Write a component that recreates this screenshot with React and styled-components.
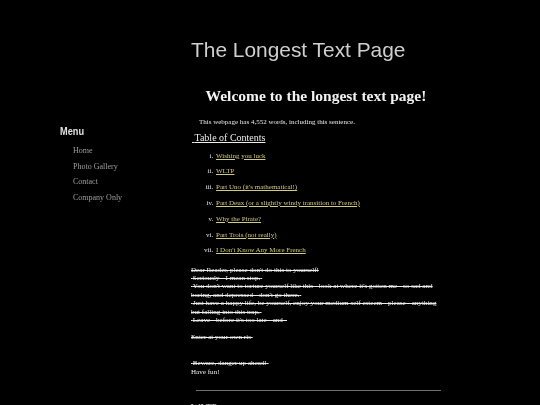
import React from "react";
import styled, { createGlobalStyle } from "styled-components";

const Global = createGlobalStyle`
  html, body { margin: 0; padding: 0; background: #000; }
  body {
    font-family: "Liberation Serif", "Times New Roman", serif;
    color: #e2e2e2;
    -webkit-font-smoothing: antialiased;
  }
`;

const Page = styled.div`
  width: 460px;
  margin: 0 auto;
  display: grid;
  grid-template-columns: 151px 250px;
  align-items: start;
  will-change: transform;
`;

const Sidebar = styled.nav`
  padding: 124.5px 0 0 20px;
`;

const MenuTitle = styled.div`
  display: block;
  font-family: "Liberation Sans", Arial, sans-serif;
  font-weight: bold;
  font-size: 11.5px;
  line-height: 13.5px;
  color: #e0e0e0;
  transform: scaleX(0.8);
  transform-origin: left center;
`;

const MenuList = styled.ul`
  list-style: none;
  margin: 5px 0 0;
  padding: 0 0 0 13px;
`;

const MenuItem = styled.li`
  font-size: 8px;
  line-height: 15.7px;
  color: #9e9e9e;
`;

const Main = styled.main`
  display: flex;
  flex-direction: column;
`;

const SiteTitle = styled.h1`
  margin: 37.5px 0 0;
  font-family: "Liberation Sans", Arial, sans-serif;
  font-weight: normal;
  font-size: 20.9px;
  line-height: 24px;
  color: #cfcfcf;
  white-space: nowrap;
`;

const Welcome = styled.h2`
  margin: 25px 0 0;
  font-size: 15.5px;
  line-height: 18px;
  font-weight: bold;
  text-align: center;
  color: #f2f2f2;
  white-space: nowrap;
`;

const Intro = styled.p`
  margin: 13.1px 0 0;
  padding-left: 8px;
  font-size: 7px;
  line-height: 9px;
  color: #e8e8e8;
`;

const TocHeading = styled.div`
  margin-top: 5px;
  font-size: 10px;
  line-height: 12px;
  color: #ececec;
  text-decoration: underline;
  padding-left: 1px;
`;

const Toc = styled.ol`
  list-style: lower-roman;
  margin: 5px 0 0;
  padding: 0 0 0 24px;
`;

const TocItem = styled.li`
  font-size: 7px;
  line-height: 15.8px;
  color: #e4e4e4;
  padding-left: 1px;
`;

const TocLink = styled.a`
  color: #d0c883;
  text-decoration: underline;
`;

const Warning = styled.div`
  margin-top: 6.5px;
  font-size: 7.1px;
  line-height: 8.4px;
  color: #ececec;
`;

const Notice = styled.div`
  margin-top: 18px;
  font-size: 7.1px;
  line-height: 8.4px;
  color: #ececec;
`;

const Struck = styled.s`
  text-decoration: line-through;
`;

const Rule = styled.hr`
  border: 0;
  border-top: 1px solid #707070;
  margin: 13.5px 0 0 5px;
  height: 0;
`;

const SectionTitle = styled.h3`
  margin: 11px 0 0;
  font-size: 10px;
  line-height: 12px;
  font-weight: normal;
  color: #cfcfcf;
`;

const menu = ["Home", "Photo Gallery", "Contact", "Company Only"];
const toc = [
  "Wishing you luck",
  "WLTP",
  "Part Uno (it's mathematical!)",
  "Part Deux (or a slightly windy transition to French)",
  "Why the Pirate?",
  "Part Trois (not really)",
  "I Don't Know Any More French",
];

const nb = "\u00a0";

export default function App() {
  return (
    <>
      <Global />
      <Page>
        <Sidebar>
          <MenuTitle>Menu</MenuTitle>
          <MenuList>
            {menu.map((m) => (
              <MenuItem key={m}>{m}</MenuItem>
            ))}
          </MenuList>
        </Sidebar>
        <Main>
          <SiteTitle>The Longest Text Page</SiteTitle>
          <Welcome>Welcome to the longest text page!</Welcome>
          <Intro>This webpage has 4,552 words, including this sentence.</Intro>
          <TocHeading>{nb}Table of Contents</TocHeading>
          <Toc>
            {toc.map((t) => (
              <TocItem key={t}>
                <TocLink href="#">{t}</TocLink>
              </TocItem>
            ))}
          </Toc>
          <Warning>
            <Struck>
              Dear Reader, please don't do this to yourself!
              <br />
              {nb}Seriously - I mean stop.{nb}
              <br />
              {nb}You don't want to torture yourself like this - look at where it's gotten me - so sad and boring, and depressed - don't go there.{nb}
              <br />
              {nb}Just have a happy life, be yourself, enjoy your medium self esteem - please - anything but falling into this trap.{nb}
              <br />
              {nb}Leave - before it's too late - and -
            </Struck>
            <br />
            <br />
            <Struck>Enter at your own ris{nb}</Struck>
          </Warning>
          <Notice>
            <Struck>{nb}Beware, danger up ahead!{nb}</Struck>
            <br />
            Have fun!
          </Notice>
          <Rule />
          <SectionTitle>WLTP</SectionTitle>
        </Main>
      </Page>
    </>
  );
}
